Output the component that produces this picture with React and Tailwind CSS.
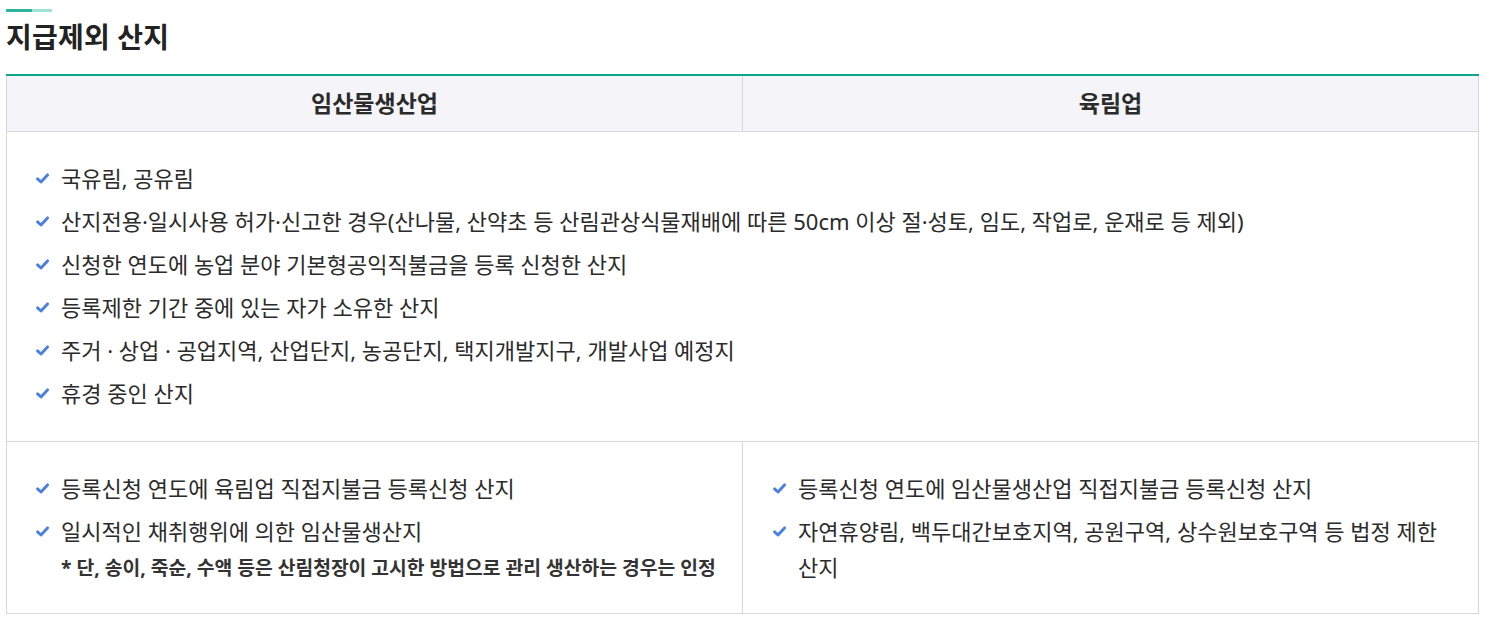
import React from "react";

const Check = () => (
  <svg
    className="mt-[13px] h-[11px] w-[13px] shrink-0 text-[#4a7fe3]"
    viewBox="0 0 13 11"
    fill="none"
    aria-hidden
  >
    <path
      d="M1.6 5.9l3.4 3.1L11.5 1.9"
      stroke="currentColor"
      strokeWidth="2.9"
      strokeLinecap="round"
      strokeLinejoin="round"
    />
  </svg>
);

const Item = ({ children, note }) => (
  <li className="flex gap-[12px]">
    <Check />
    <div>
      <p>{children}</p>
      {note && (
        <p className="text-[19.3px] font-bold leading-[37px] text-[#333]">{note}</p>
      )}
    </div>
  </li>
);

const common = [
  "국유림, 공유림",
  "산지전용·일시사용 허가·신고한 경우(산나물, 산약초 등 산림관상식물재배에 따른 50cm 이상 절·성토, 임도, 작업로, 운재로 등 제외)",
  "신청한 연도에 농업 분야 기본형공익직불금을 등록 신청한 산지",
  "등록제한 기간 중에 있는 자가 소유한 산지",
  "주거 · 상업 · 공업지역, 산업단지, 농공단지, 택지개발지구, 개발사업 예정지",
  "휴경 중인 산지",
];

export default function App() {
  return (
    <div
      className="bg-white px-[6px] pt-[9px] text-[#2b2b2b]"
      style={{ fontFamily: '"Noto Sans", "Noto Sans CJK KR", sans-serif' }}
    >
      {/* Title */}
      <div className="flex h-[3px] w-[46px]">
        <span className="w-[26px] bg-[#2db59b]" />
        <span className="flex-1 bg-[#a0e1d6]" />
      </div>
      <h2 className="mt-[5px] text-[28px] font-bold leading-[40px] tracking-[0.2px] text-[#222]">
        지급제외 산지
      </h2>

      {/* Table */}
      <table className="mt-[17px] w-[1473px] table-fixed border-collapse border-t-2 border-t-[#0ea58d] text-[22px]">
        <thead>
          <tr className="bg-[#f5f5f9]">
            <th className="h-[56px] border border-t-0 border-[#d6d6dc] text-[23px] font-bold">
              임산물생산업
            </th>
            <th className="h-[56px] border border-t-0 border-[#d6d6dc] text-[23px] font-bold">
              육림업
            </th>
          </tr>
        </thead>
        <tbody>
          <tr>
            <td colSpan={2} className="border border-[#d6d6dc] pt-[28px] pb-[30px] pl-[29px]">
              <ul className="flex flex-col gap-[7px] leading-[36px]">
                {common.map((t) => (
                  <Item key={t}>{t}</Item>
                ))}
              </ul>
            </td>
          </tr>
          <tr>
            <td className="border border-[#d6d6dc] pt-[28px] pb-[27px] pl-[29px] align-top">
              <ul className="flex flex-col gap-[7px] leading-[36px]">
                <Item>등록신청 연도에 육림업 직접지불금 등록신청 산지</Item>
                <Item note="* 단, 송이, 죽순, 수액 등은 산림청장이 고시한 방법으로 관리 생산하는 경우는 인정">
                  일시적인 채취행위에 의한 임산물생산지
                </Item>
              </ul>
            </td>
            <td className="border border-[#d6d6dc] pt-[28px] pb-[27px] pl-[30px] pr-[40px] align-top">
              <ul className="flex flex-col gap-[7px] leading-[36px]">
                <Item>등록신청 연도에 임산물생산업 직접지불금 등록신청 산지</Item>
                <Item>
                  자연휴양림, 백두대간보호지역, 공원구역, 상수원보호구역 등 법정 제한 산지
                </Item>
              </ul>
            </td>
          </tr>
        </tbody>
      </table>
    </div>
  );
}
